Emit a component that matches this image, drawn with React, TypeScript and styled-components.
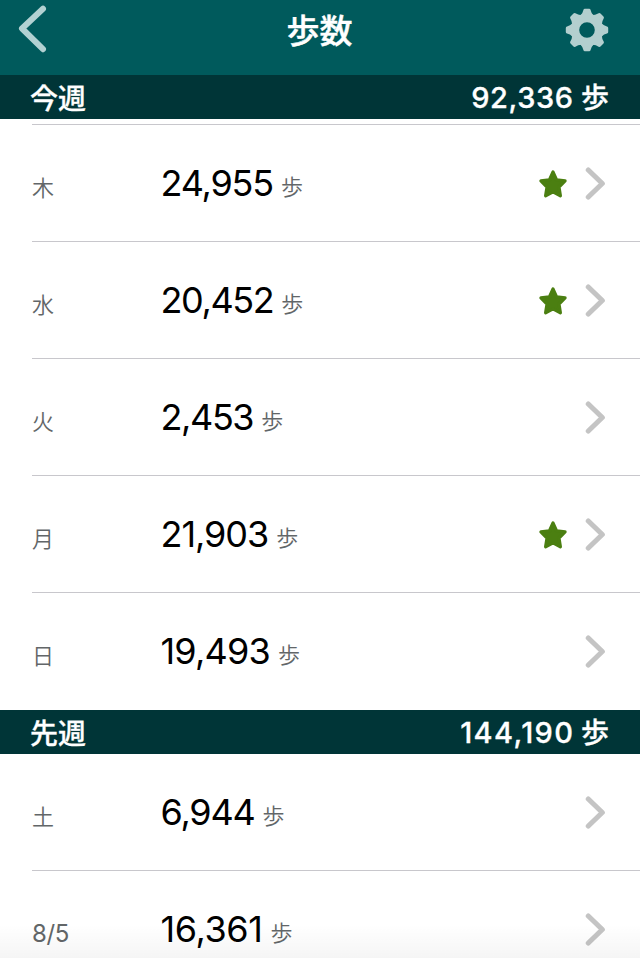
import React from "react";
import styled, { createGlobalStyle } from "styled-components";

const Global = createGlobalStyle`
  * { box-sizing: border-box; }
  body { margin: 0; background: #fff; font-family: Inter, "Noto Sans CJK JP", sans-serif; }
`;
const Screen = styled.main`
  width: 640px; height: 958px; overflow: hidden; background: #fff;
  display: flex; flex-direction: column; position: relative;
`;
const NavBar = styled.header`
  height: 75px; flex: none; background: #005a5c; color: #fff;
  display: grid; grid-template-columns: 80px 1fr 80px; align-items: start;
`;
const Title = styled.h1`
  margin: 0; padding: 1px 1px 0 0; text-align: center; font-size: 33px; line-height: 60px; font-weight: 500;
  -webkit-text-stroke: 0.4px #fff;
`;
const NavButton = styled.button<{ $end?: boolean }>`
  border: 0; padding: ${p => (p.$end ? "8px 31px 0 0" : "4px 0 0 17px")}; background: none; display: flex;
  justify-content: ${p => (p.$end ? "flex-end" : "flex-start")};
`;
const WeekHeader = styled.div`
  height: 44px; flex: none; padding: 2px 31px 0 30px; background: #003537; color: #fff;
  display: flex; justify-content: space-between; font-size: 28px; line-height: 44px; font-weight: 500;
  -webkit-text-stroke: 0.3px #fff;
`;
const Total = styled.span`
  display: flex; align-items: baseline; gap: 8px; line-height: 42px;
`;
const TotalNumber = styled.span<{ $tracking: number }>`
  font-size: 29px; letter-spacing: ${p => p.$tracking}px; margin-right: ${p => -p.$tracking}px;
`;
const Rows = styled.div<{ $inset?: boolean }>`
  flex: none; padding: ${p => (p.$inset ? "5px 0 1px" : "0")};
`;
const Row = styled.div<{ $line?: boolean }>`
  height: ${p => (p.$line ? 117 : 116)}px; margin-left: 32px; padding-right: 34px;
  border-top: ${p => (p.$line ? "1px solid #c8c7cc" : "0")};
  display: grid; grid-template-columns: 129px 1fr auto; align-items: center;
`;
const Day = styled.span`font-size: 22px; line-height: 30px; font-weight: 350; color: #626668; padding-top: 10px;`;
const DateLabel = styled.span`font-size: 24px; font-weight: 400; color: #626668; letter-spacing: -0.4px;`;
const Steps = styled.span<{ $tracking: number }>`
  font-size: 36px; line-height: 48px; color: #000; margin-left: -0.5px;
  letter-spacing: ${p => p.$tracking}px;
`;
const Unit = styled.small`
  font-size: 22px; line-height: 0; font-weight: 350; color: #626668; margin-left: 8px; letter-spacing: 0;
  vertical-align: 1px;
`;
const Marks = styled.span`display: flex; align-items: center; gap: 17px; padding-top: 1px;`;
const Fade = styled.div`
  position: absolute; left: 0; right: 0; bottom: 0; height: 34px; pointer-events: none;
  background: linear-gradient(rgba(0,0,0,0), rgba(0,0,0,0.04));
`;

const Star = () => (
  <svg width="30" height="30" viewBox="0 0 30 30">
    <path d="M15 3 18.6 10.8 27.1 11.9 21 18 22.4 26.8 15 22.8 7.6 26.8 9 18 2.9 11.9 11.4 10.8Z" fill="#4b7f11" stroke="#4b7f11" strokeWidth="3.2" strokeLinejoin="round" />
  </svg>
);
const Chevron = () => (
  <svg width="21" height="34" viewBox="0 0 21 34">
    <path d="M3.3 3 17.3 16.5 3.3 30" fill="none" stroke="#c4c4c4" strokeWidth="5.1" strokeLinecap="round" strokeLinejoin="round" />
  </svg>
);
const Back = () => (
  <svg width="31" height="50" viewBox="0 0 31 50">
    <path d="M26 4.8 5 24.5 26 45.2" fill="none" stroke="#b2d1d2" strokeWidth="6" strokeLinecap="round" strokeLinejoin="round" />
  </svg>
);
const Gear = () => (
  <svg width="44" height="44" viewBox="-22 -22 44 44">
    <g fill="#b3cfcf">
      {[0, 45, 90, 135, 180, 225, 270, 315].map(a => (
        <path key={a} transform={`rotate(${a})`} d="M-6.5-14.5Q-4.2-17-3.6-20Q-3.3-21.2-2.1-21.2H2.1Q3.3-21.2 3.6-20Q4.2-17 6.5-14.5Z" />
      ))}
      <path fillRule="evenodd" d="M0-16.4A16.4 16.4 0 1 1 0 16.4 16.4 16.4 0 1 1 0-16.4ZM0-7.8A7.8 7.8 0 1 0 0 7.8 7.8 7.8 0 1 0 0-7.8Z" />
    </g>
  </svg>
);

interface Entry { day: string; steps: string; tracking: number; star?: boolean }
const thisWeek: Entry[] = [
  { day: "木", steps: "24,955", tracking: -1.2, star: true },
  { day: "水", steps: "20,452", tracking: -1.4, star: true },
  { day: "火", steps: "2,453", tracking: -1.4 },
  { day: "月", steps: "21,903", tracking: -1.05, star: true },
  { day: "日", steps: "19,493", tracking: -0.8 },
];
const lastWeek: Entry[] = [
  { day: "土", steps: "6,944", tracking: -1.2 },
  { day: "8/5", steps: "16,361", tracking: -0.4 },
];

const DayRow = ({ entry, line }: { entry: Entry; line: boolean }) => (
  <Row $line={line}>
    <Day>{entry.day.includes("/") ? <DateLabel>{entry.day}</DateLabel> : entry.day}</Day>
    <Steps $tracking={entry.tracking}>{entry.steps}<Unit>歩</Unit></Steps>
    <Marks>{entry.star && <Star />}<Chevron /></Marks>
  </Row>
);

export default function App() {
  return (
    <Screen lang="ja">
      <Global />
      <NavBar>
        <NavButton aria-label="戻る"><Back /></NavButton>
        <Title>歩数</Title>
        <NavButton $end aria-label="設定"><Gear /></NavButton>
      </NavBar>
      <WeekHeader>
        <span>今週</span>
        <Total><TotalNumber $tracking={0.6}>92,336</TotalNumber><span>歩</span></Total>
      </WeekHeader>
      <Rows $inset>{thisWeek.map(e => <DayRow key={e.day} entry={e} line />)}</Rows>
      <WeekHeader>
        <span>先週</span>
        <Total><TotalNumber $tracking={1.4}>144,190</TotalNumber><span>歩</span></Total>
      </WeekHeader>
      <Rows>{lastWeek.map((e, i) => <DayRow key={e.day} entry={e} line={i > 0} />)}</Rows>
      <Fade />
    </Screen>
  );
}
